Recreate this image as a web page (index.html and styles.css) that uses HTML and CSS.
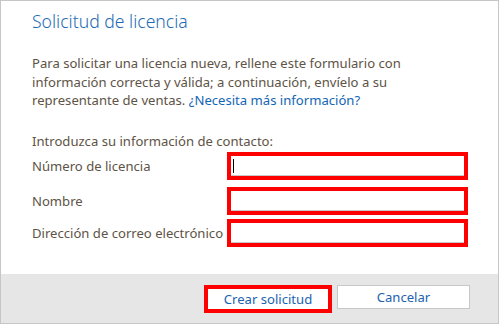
FILE: index.html
```html
<!DOCTYPE html>
<html lang="es">

<head>
  <meta charset="UTF-8">
  <title>Solicitud de licencia</title>
  <link rel="stylesheet" href="styles.css">
</head>

<body>
  <div class="dialog">
    <div class="content">
      <h2 class="title">Solicitud de licencia</h2>
      <p class="intro">Para solicitar una licencia nueva, rellene este formulario con información correcta y válida; a continuación, envíelo a su representante de ventas. <a href="#">¿Necesita más información?</a></p>

      <p class="hint">Introduzca su información de contacto:</p>
      <div class="form">
        <div class="row first">
          <label>Número de licencia</label>
          <div class="field"><span class="caret"></span></div>
        </div>
        <div class="row">
          <label>Nombre</label>
          <div class="field"></div>
        </div>
        <div class="row">
          <label>Dirección de correo electrónico</label>
          <div class="field"></div>
        </div>
      </div>
    </div>

    <div class="footer">
      <button class="btn marked">Crear solicitud</button>
      <button class="btn">Cancelar</button>
    </div>
  </div>
</body>

</html>
```

FILE: styles.css
```css
body {
  margin: 0;
  background-color: #fff;
  font-family: 'Noto Sans', 'Open Sans', sans-serif;
}

.dialog {
  width: 499px;
  height: 324px;
  box-sizing: border-box;
  border: 1px solid #c6c6c6;
  display: flex;
  flex-direction: column;
}

.content {
  flex: 1;
  padding: 0 30px 0 31px;
}

.title {
  margin: 7px 0 0 0;
  font-size: 17.6px;
  font-weight: 300;
  color: #1f6bb5;
  line-height: 26px;
}

.intro {
  width: 380px;
  margin: 20px 0 0 0;
  font-size: 13.1px;
  line-height: 18.5px;
  color: #5e5346;
}

.intro a {
  color: #1366b4;
  text-decoration: none;
}

.hint {
  margin: 22px 0 0 0;
  font-size: 13.1px;
  line-height: 18px;
  color: #5e5346;
}

.form {
  margin-top: 2px;
  display: flex;
  flex-direction: column;
  gap: 4px;
}

.row {
  display: flex;
  align-items: center;
  height: 28px;
}

.row.first {
  margin-bottom: 3px;
}

.row label {
  width: 196px;
  font-size: 13.1px;
  color: #5e5346;
}

.field {
  width: 243px;
  height: 28px;
  box-sizing: border-box;
  border: 4px solid #ff0000;
  background-color: #fff;
  box-shadow: inset 0 -1px 0 #c8c8c8;
  position: relative;
}

.caret {
  position: absolute;
  left: 2px;
  top: 3px;
  width: 1px;
  height: 14px;
  background-color: #000;
}

.footer {
  height: 49px;
  background-color: #e6e6e6;
  display: flex;
  justify-content: flex-end;
  align-items: flex-start;
  gap: 5px;
  padding: 11px 28px 0 0;
  box-sizing: border-box;
}

.btn {
  width: 133px;
  height: 24px;
  background-color: #fff;
  border: 1px solid #c8c8c8;
  font-family: 'Noto Sans', 'Open Sans', sans-serif;
  font-size: 13.1px;
  color: #1c63b0;
  padding: 0;
  cursor: pointer;
}

.btn.marked {
  width: 128px;
  height: 28px;
  border: 4px solid #ff0000;
}
```
